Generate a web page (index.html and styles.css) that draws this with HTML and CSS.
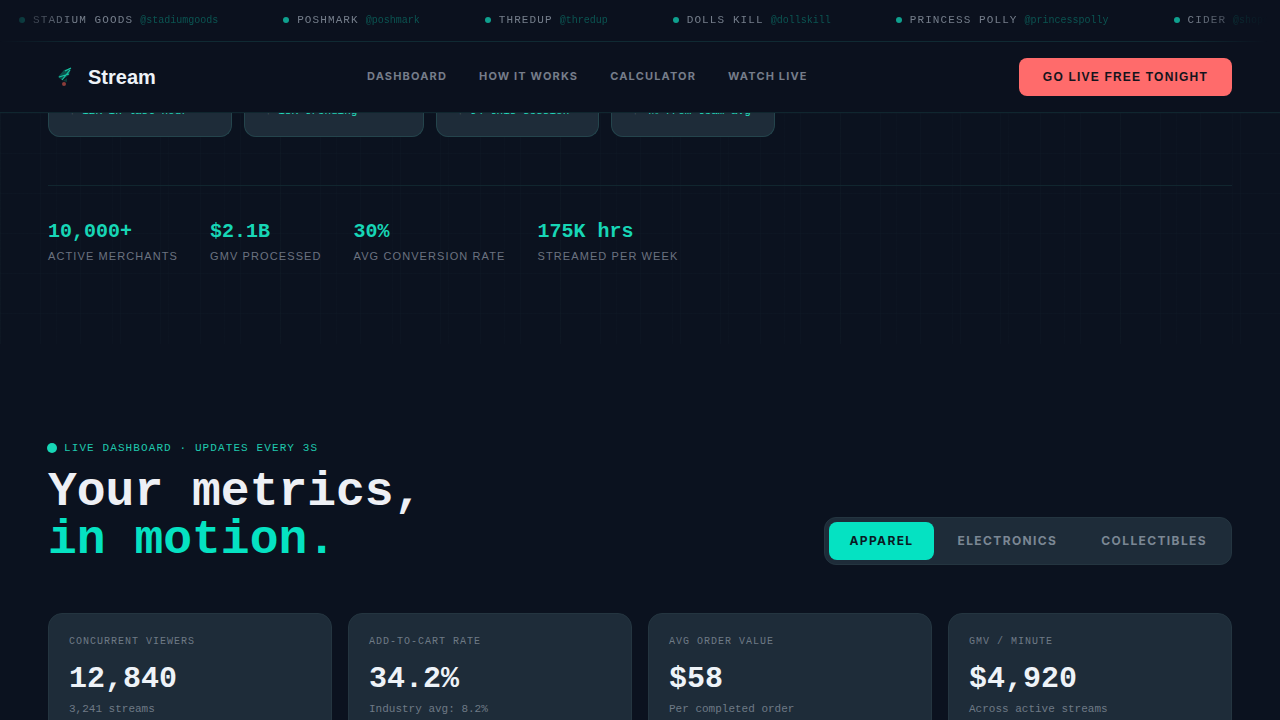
FILE: index.html
```html
<!DOCTYPE html>
<html lang="en">
<head>
  <meta charset="UTF-8">
  <meta name="viewport" content="width=device-width, initial-scale=1.0">
  <title>Stream</title>
  <link rel="stylesheet" href="styles.css">
</head>
<body>

  <header class="site-header">
    <div class="ticker">
      <div class="ticker-item"><span class="ticker-dot"></span><span class="ticker-name">STADIUM GOODS</span><span class="ticker-handle">@stadiumgoods</span></div>
      <div class="ticker-item"><span class="ticker-dot"></span><span class="ticker-name">POSHMARK</span><span class="ticker-handle">@poshmark</span></div>
      <div class="ticker-item"><span class="ticker-dot"></span><span class="ticker-name">THREDUP</span><span class="ticker-handle">@thredup</span></div>
      <div class="ticker-item"><span class="ticker-dot"></span><span class="ticker-name">DOLLS KILL</span><span class="ticker-handle">@dollskill</span></div>
      <div class="ticker-item"><span class="ticker-dot"></span><span class="ticker-name">PRINCESS POLLY</span><span class="ticker-handle">@princesspolly</span></div>
      <div class="ticker-item"><span class="ticker-dot"></span><span class="ticker-name">CIDER</span><span class="ticker-handle">@shopcider</span></div>
    </div>

    <nav class="navbar">
      <a class="logo" href="#">
        <svg class="logo-icon" width="20" height="24" viewBox="0 0 20 24" aria-hidden="true">
          <path d="M16 3 L9 5 L3 12 L7 15 L14 10 Z" fill="#0b4f4a"/>
          <path d="M16 3 L10 6 M4 12 L14 9 M7 15 L15 5" stroke="#17c4a4" stroke-width="1.2" fill="none"/>
          <path d="M8 16 L12 13 L12 17 Z" fill="#0b3d3a"/>
          <circle cx="9" cy="19" r="2" fill="#8c3d3a"/>
        </svg>
        <span class="logo-text">Stream</span>
      </a>
      <div class="nav-links">
        <a href="#">DASHBOARD</a>
        <a href="#">HOW IT WORKS</a>
        <a href="#">CALCULATOR</a>
        <a href="#">WATCH LIVE</a>
      </div>
      <button class="cta-button">GO LIVE FREE TONIGHT</button>
    </nav>
  </header>

  <section class="hero">
    <div class="hero-cards">
      <div class="hero-card card-a"><span class="hero-card-note"><i>↑</i> 12K in last hour</span></div>
      <div class="hero-card card-b"><span class="hero-card-note"><i>↑</i> 18K trending</span></div>
      <div class="hero-card card-c"><span class="hero-card-note"><i>↑</i> 94 this session</span></div>
      <div class="hero-card card-d"><span class="hero-card-note"><i>↑</i> 4% from team avg</span></div>
    </div>
    <div class="hero-stats">
      <div class="hero-stat">
        <div class="hero-stat-value">10,000+</div>
        <div class="hero-stat-label">ACTIVE MERCHANTS</div>
      </div>
      <div class="hero-stat">
        <div class="hero-stat-value">$2.1B</div>
        <div class="hero-stat-label">GMV PROCESSED</div>
      </div>
      <div class="hero-stat">
        <div class="hero-stat-value">30%</div>
        <div class="hero-stat-label">AVG CONVERSION RATE</div>
      </div>
      <div class="hero-stat">
        <div class="hero-stat-value">175K hrs</div>
        <div class="hero-stat-label">STREAMED PER WEEK</div>
      </div>
    </div>
  </section>

  <section class="dashboard">
    <div class="dashboard-head">
      <div>
        <div class="eyebrow"><span class="eyebrow-dot"></span>LIVE DASHBOARD · UPDATES EVERY 3S</div>
        <h2 class="dashboard-title">Your metrics,<br><span class="accent">in motion.</span></h2>
      </div>
      <div class="tabs">
        <button class="tab active">APPAREL</button>
        <button class="tab">ELECTRONICS</button>
        <button class="tab">COLLECTIBLES</button>
      </div>
    </div>

    <div class="metric-grid">
      <div class="metric-card">
        <div class="metric-label">CONCURRENT VIEWERS</div>
        <div class="metric-value">12,840</div>
        <div class="metric-sub">3,241 streams</div>
      </div>
      <div class="metric-card">
        <div class="metric-label">ADD-TO-CART RATE</div>
        <div class="metric-value">34.2%</div>
        <div class="metric-sub">Industry avg: 8.2%</div>
      </div>
      <div class="metric-card">
        <div class="metric-label">AVG ORDER VALUE</div>
        <div class="metric-value">$58</div>
        <div class="metric-sub">Per completed order</div>
      </div>
      <div class="metric-card">
        <div class="metric-label">GMV / MINUTE</div>
        <div class="metric-value">$4,920</div>
        <div class="metric-sub">Across active streams</div>
      </div>
    </div>
  </section>

</body>
</html>
```

FILE: styles.css
```css
body {
  margin: 0;
  height: 720px;
  overflow: hidden;
  background-color: #0b121f;
  color: #e8f0f8;
  font-family: "Liberation Sans", Arial, sans-serif;
}

a {
  color: inherit;
  text-decoration: none;
}

/* header */
.site-header {
  background-color: #0b111e;
  border-bottom: 1px solid #10262f;
}

.ticker {
  display: flex;
  gap: 65px;
  height: 42px;
  align-items: center;
  padding: 0 0 1px 19px;
  box-sizing: border-box;
  overflow: hidden;
  white-space: nowrap;
  border-bottom: 1px solid #102a33;
  font-family: "Liberation Mono", monospace;
  -webkit-mask-image: linear-gradient(to right, transparent, #000 6%, #000 93%, transparent 99%);
  mask-image: linear-gradient(to right, transparent, #000 6%, #000 93%, transparent 99%);
}

.ticker-item {
  display: flex;
  align-items: center;
  flex-shrink: 0;
}

.ticker-dot {
  width: 6px;
  height: 6px;
  border-radius: 50%;
  background-color: #0fa08e;
  margin-right: 8px;
}

.ticker-name {
  font-size: 11px;
  letter-spacing: 0.1em;
  color: #757e8b;
  margin-right: 7px;
}

.ticker-handle {
  font-size: 10px;
  color: #0b5552;
}

.navbar {
  display: flex;
  align-items: center;
  justify-content: space-between;
  height: 70px;
  padding: 0 48px;
}

.logo {
  display: flex;
  align-items: center;
  gap: 13px;
  padding-left: 7px;
}

.logo-text {
  font-size: 20px;
  font-weight: bold;
  color: #eef3f8;
}

.nav-links {
  display: flex;
  gap: 32px;
  margin-top: -2px;
  font-family: Inter, sans-serif;
  font-size: 11px;
  font-weight: 700;
  letter-spacing: 0.105em;
  color: #767d8a;
}

.cta-button {
  background-color: #ff6b6b;
  color: #14141c;
  border: none;
  border-radius: 8px;
  height: 38px;
  padding: 0 24px;
  font-family: "Liberation Sans", Arial, sans-serif;
  font-size: 12px;
  font-weight: bold;
  letter-spacing: 0.1em;
  cursor: pointer;
}

/* hero */
.hero {
  height: 231px;
  padding: 0 48px;
  background-image:
    linear-gradient(rgba(120, 200, 200, 0.014) 1px, transparent 1px),
    linear-gradient(90deg, rgba(120, 200, 200, 0.014) 1px, transparent 1px),
    linear-gradient(90deg, rgba(120, 200, 200, 0.01) 1px, transparent 1px);
  background-size: 40px 40px, 40px 40px, 56px 56px;
}

.hero-cards {
  display: flex;
  gap: 12px;
  height: 24px;
  padding-bottom: 48px;
  border-bottom: 1px solid #11262f;
}

.hero-card {
  height: 24px;
  box-sizing: border-box;
  background-color: #1e2c39;
  border: 1px solid #24444c;
  border-top: none;
  border-radius: 0 0 12px 12px;
  padding-left: 20px;
  overflow: hidden;
}

.card-a { width: 184px; }
.card-b { width: 180px; }
.card-c { width: 163px; }
.card-d { width: 164px; }

.hero-card-note {
  display: block;
  margin-top: -8px;
  font-family: "Liberation Mono", monospace;
  font-size: 11px;
  line-height: 13px;
  color: #22e0c0;
}

.hero-card-note i {
  font-style: normal;
  color: #4f6570;
}

.hero-stats {
  display: flex;
  gap: 32px;
  padding-top: 33px;
}

.hero-stat-value {
  font-family: "Liberation Mono", monospace;
  font-size: 20px;
  font-weight: bold;
  line-height: 26px;
  color: #17d6b6;
}

.hero-stat-label {
  margin-top: 5px;
  font-size: 11px;
  line-height: 13px;
  letter-spacing: 0.1em;
  color: #6b7380;
}

/* dashboard */
.dashboard {
  padding: 97px 48px 0;
}

.dashboard-head {
  display: flex;
  justify-content: space-between;
  align-items: flex-end;
}

.eyebrow {
  display: flex;
  align-items: center;
  gap: 7px;
  font-family: "Liberation Mono", monospace;
  font-size: 11px;
  line-height: 14px;
  letter-spacing: 0.1em;
  color: #1fc9ae;
}

.eyebrow-dot {
  width: 10px;
  height: 10px;
  margin-left: -1px;
  border-radius: 50%;
  background-color: #17d6b6;
}

.dashboard-title {
  margin: 13px 0 0;
  font-family: "Liberation Mono", monospace;
  font-size: 48px;
  font-weight: bold;
  line-height: 48px;
  color: #eef0f5;
}

.accent {
  color: #05e2c2;
}

.tabs {
  display: flex;
  gap: 4px;
  padding: 4px;
  margin-bottom: -1px;
  background-color: #1e2c39;
  border: 1px solid #243540;
  border-radius: 12px;
}

.tab {
  height: 38px;
  padding: 0 20px 2px;
  background: none;
  border: none;
  border-radius: 8px;
  font-family: Inter, sans-serif;
  font-size: 12px;
  font-weight: 700;
  letter-spacing: 0.115em;
  color: #7b8794;
  cursor: pointer;
}

.tab.active {
  background-color: #05e2c2;
  color: #0a1a24;
}

.metric-grid {
  display: grid;
  grid-template-columns: repeat(4, 1fr);
  gap: 16px;
  margin-top: 49px;
}

.metric-card {
  background-color: #1e2c39;
  border: 1px solid #243540;
  border-radius: 14px;
  padding: 21px 20px 20px;
  height: 160px;
  box-sizing: border-box;
}

.metric-label {
  font-family: "Liberation Mono", monospace;
  font-size: 10px;
  line-height: 14px;
  letter-spacing: 0.1em;
  color: #6e7a86;
}

.metric-value {
  margin-top: 12px;
  font-family: "Liberation Mono", monospace;
  font-size: 30px;
  font-weight: bold;
  line-height: 36px;
  color: #eef3f8;
}

.metric-sub {
  margin-top: 5px;
  font-family: "Liberation Mono", monospace;
  font-size: 11px;
  line-height: 14px;
  color: #6e7a86;
}
```
